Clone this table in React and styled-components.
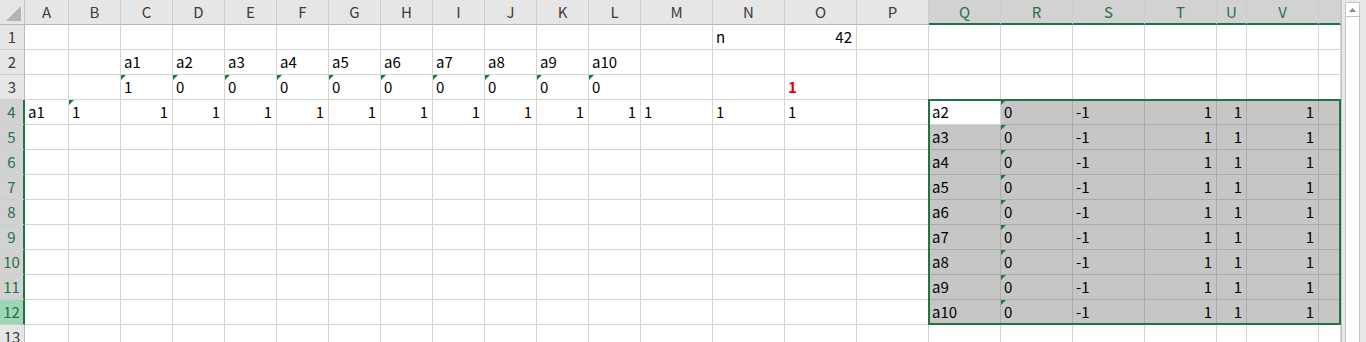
import styled, { createGlobalStyle } from "styled-components";

const GlobalStyle = createGlobalStyle`
  html, body {
    margin: 0;
    padding: 0;
    background: #ffffff;
    overflow: hidden;
  }
`;

// [name, visible width, label scrolled out of view]
const COLUMNS = [
  ["A", 44], ["B", 52], ["C", 52], ["D", 52], ["E", 52], ["F", 52], ["G", 52],
  ["H", 52], ["I", 52], ["J", 52], ["K", 52], ["L", 52], ["M", 72], ["N", 72],
  ["O", 72], ["P", 72], ["Q", 72], ["R", 72], ["S", 72], ["T", 72], ["U", 30],
  ["V", 72], ["W", 22, true],
];
const ROW_COUNT = 13;

// selected range Q4:W12, active cell Q4
const SEL_COLS = "QRSTUVW";
const SEL_FIRST_ROW = 4;
const SEL_LAST_ROW = 12;
const CURRENT_ROW = 12;

const cells = {};
cells.N1 = { v: "n" };
cells.O1 = { v: "42", right: true };
"CDEFGHIJKL".split("").forEach((col, i) => {
  cells[col + 2] = { v: "a" + (i + 1) };
  cells[col + 3] = { v: i === 0 ? "1" : "0", flag: true };
  cells[col + 4] = { v: "1", right: true };
});
cells.O3 = { v: "1", red: true };
cells.A4 = { v: "a1" };
cells.B4 = { v: "1", flag: true };
cells.M4 = { v: "1" };
cells.N4 = { v: "1" };
cells.O4 = { v: "1" };
for (let r = SEL_FIRST_ROW; r <= SEL_LAST_ROW; r++) {
  cells["Q" + r] = { v: "a" + (r - 2) };
  cells["R" + r] = { v: "0", flag: true };
  cells["S" + r] = { v: "-1" };
  cells["T" + r] = { v: "1", right: true };
  cells["U" + r] = { v: "1", right: true };
  cells["V" + r] = { v: "1", right: true };
}

const isSelected = (col, row) =>
  SEL_COLS.includes(col) && row >= SEL_FIRST_ROW && row <= SEL_LAST_ROW;

const App = () => {
  const rows = Array.from({ length: ROW_COUNT }, (_, i) => i + 1);

  return (
    <>
      <GlobalStyle />
      <Window>
        <Grid>
          <Corner>
            <svg width="24" height="24" viewBox="0 0 24 24">
              <polygon points="6,21 21,6 21,21" fill="#b4b4b4" />
            </svg>
          </Corner>
          {COLUMNS.map(([name, , partial]) => (
            <ColHead key={name} $sel={SEL_COLS.includes(name)}>
              {partial ? "" : name}
            </ColHead>
          ))}

          {rows.map((row) => [
            <RowHead
              key={"h" + row}
              $sel={row >= SEL_FIRST_ROW && row <= SEL_LAST_ROW}
              $current={row === CURRENT_ROW}
            >
              {row}
            </RowHead>,
            ...COLUMNS.map(([col]) => {
              const cell = cells[col + row];
              const sel = isSelected(col, row);
              const active = col === "Q" && row === SEL_FIRST_ROW;
              return (
                <Cell
                  key={col + row}
                  $sel={sel && !active}
                  $right={cell && cell.right}
                  $flag={cell && cell.flag}
                  $red={cell && cell.red}
                >
                  {cell ? cell.v : ""}
                </Cell>
              );
            }),
          ])}

          <SelectionFrame />
        </Grid>

        <ScrollBar>
          <Track>
            <UpButton>
              <svg width="7" height="4" viewBox="0 0 7 4">
                <polygon points="0,4 3.5,0 7,4" fill="#8a8a8a" />
              </svg>
            </UpButton>
          </Track>
        </ScrollBar>
      </Window>
    </>
  );
};

export default App;

const Window = styled.div`
  display: flex;
  width: 1366px;
  height: 342px;
  overflow: hidden;
  font-family: "Noto Sans CJK JP", "Noto Sans", sans-serif;
  font-size: 15px;
  color: #000;
`;

const Grid = styled.div`
  position: relative;
  display: grid;
  grid-template-columns: 25px ${COLUMNS.map(([, w]) => w + "px").join(" ")};
  grid-template-rows: 25px;
  grid-auto-rows: 25px;
  width: 1341px;
  flex-shrink: 0;
  align-content: start;
`;

const HeadBase = styled.div`
  box-sizing: border-box;
  display: flex;
  align-items: flex-end;
  justify-content: center;
  padding-bottom: 5px;
  line-height: 15px;
  color: #3c3c3c;
  background: #e6e6e6;
`;

const Corner = styled(HeadBase)`
  padding: 0;
  align-items: stretch;
  border-right: 1px solid #c4c4c4;
  border-bottom: 1px solid #b8b8b8;
`;

const ColHead = styled(HeadBase)`
  border-right: 1px solid #cdcdcd;
  background: ${(p) => (p.$sel ? "#d2d2d2" : "#e6e6e6")};
  color: ${(p) => (p.$sel ? "#217346" : "#3c3c3c")};
  border-bottom: ${(p) => (p.$sel ? "2px solid #217346" : "1px solid #b8b8b8")};
  padding-bottom: ${(p) => (p.$sel ? "4px" : "5px")};
`;

const RowHead = styled(HeadBase)`
  border-bottom: 1px solid #cdcdcd;
  background: ${(p) => (p.$current ? "#9fd5b7" : p.$sel ? "#d2d2d2" : "#e6e6e6")};
  color: ${(p) => (p.$sel ? "#217346" : "#3c3c3c")};
  border-right: ${(p) => (p.$sel ? "2px solid #217346" : "1px solid #b8b8b8")};
`;

const Cell = styled.div`
  position: relative;
  box-sizing: border-box;
  display: flex;
  align-items: flex-end;
  justify-content: ${(p) => (p.$right ? "flex-end" : "flex-start")};
  padding: 0 4px 5px 3px;
  line-height: 15px;
  white-space: nowrap;
  overflow: hidden;
  background: ${(p) => (p.$sel ? "#c6c6c6" : "#ffffff")};
  border-right: 1px solid ${(p) => (p.$sel ? "#ababab" : "#d4d4d4")};
  border-bottom: 1px solid ${(p) => (p.$sel ? "#ababab" : "#d4d4d4")};
  color: ${(p) => (p.$red ? "#e00000" : "#000")};
  font-weight: ${(p) => (p.$red ? 700 : 400)};

  &::before {
    content: "";
    display: ${(p) => (p.$flag ? "block" : "none")};
    position: absolute;
    top: 0;
    left: 0;
    border-top: 5px solid #1e7b34;
    border-right: 5px solid transparent;
  }
`;

/* drawn over the selected block; absolute so it takes no grid slot */
const SelectionFrame = styled.div`
  position: absolute;
  grid-column: 18 / 25;
  grid-row: 5 / 14;
  top: -1px;
  left: -1px;
  right: 0;
  bottom: 0;
  border: 2px solid #217346;
  pointer-events: none;
`;

const ScrollBar = styled.div`
  box-sizing: border-box;
  width: 25px;
  height: 342px;
  padding: 2px 6px 0 3px;
  background: #e9e9e9;
  border-left: 1px solid #c2c2c2;
`;

const Track = styled.div`
  box-sizing: border-box;
  height: 100%;
  background: #ffffff;
  border: 1px solid #c4c4c4;
  border-bottom: none;
`;

const UpButton = styled.div`
  display: flex;
  align-items: center;
  justify-content: center;
  height: 13px;
  border-bottom: 1px solid #c4c4c4;
`;
